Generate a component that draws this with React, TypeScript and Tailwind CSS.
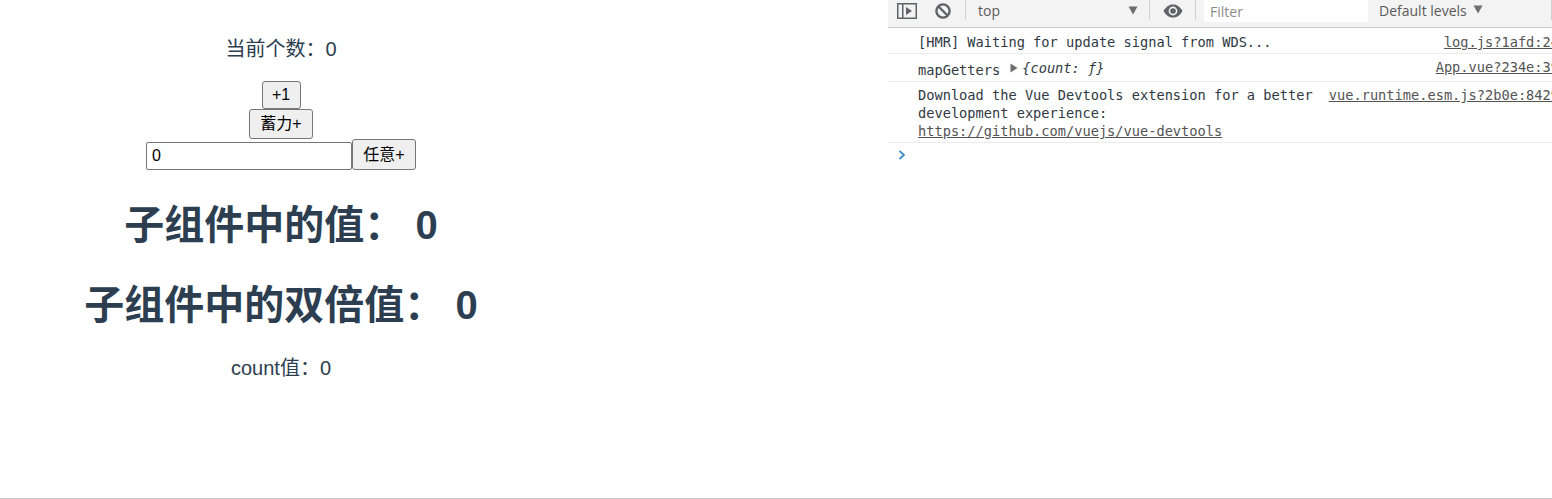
const cjk = "font-['Liberation_Sans','Noto_Sans_CJK_SC',sans-serif]";

const Divider = () => <div className="w-px h-[20px] bg-[#d0d0d0] shrink-0" />;

const Triangle = ({ className }: { className: string }) => (
  <svg width="10" height="9" viewBox="0 0 10 9" className={className}>
    <path d="M0.5 0.5 H9.5 L5 8.5 Z" fill="#6e6e6e" />
  </svg>
);

const Toolbar = () => (
  <div className="h-[28px] shrink-0 flex items-start bg-[#f3f3f3] border-b border-[#cccccc] font-['Open_Sans',sans-serif] text-[14px] text-[#5a5a5a]">
    <svg width="20" height="16" viewBox="0 0 20 16" className="ml-[9px] mt-[3px] shrink-0">
      <rect x="0.75" y="0.75" width="18.5" height="14.5" fill="none" stroke="#5f6368" strokeWidth="1.5" />
      <rect x="5" y="1" width="1.5" height="14" fill="#5f6368" />
      <path d="M9 4 L15 8 L9 12 Z" fill="#5f6368" />
    </svg>
    <svg width="16" height="16" viewBox="0 0 16 16" className="ml-[18px] mt-[3px] mr-[14px] shrink-0">
      <circle cx="8" cy="8" r="6.6" fill="none" stroke="#5f6368" strokeWidth="2.4" />
      <path d="M3.5 3.5 L12.5 12.5" stroke="#5f6368" strokeWidth="2.4" />
    </svg>
    <Divider />
    <div className="flex items-start w-[183px] h-[22px] pl-[12px] leading-[22px] shrink-0">
      <span className="flex-1">top</span>
      <Triangle className="mt-[6px] mr-[11px]" />
    </div>
    <Divider />
    <svg width="20" height="14" viewBox="0 0 20 14" className="ml-[13px] mr-[12px] mt-[4px] shrink-0">
      <path d="M0.5 7 C3.5 2 6.5 0.5 10 0.5 C13.5 0.5 16.5 2 19.5 7 C16.5 12 13.5 13.5 10 13.5 C6.5 13.5 3.5 12 0.5 7 Z" fill="#5f6368" />
      <circle cx="10" cy="7" r="4.4" fill="#f3f3f3" />
      <circle cx="10" cy="7" r="2.8" fill="#5f6368" />
    </svg>
    <Divider />
    <div className="ml-[8px] w-[164px] h-[22px] bg-white pl-[6px] leading-[24px] text-[#8a8a8a] shrink-0">Filter</div>
    <div className="ml-[11px] flex items-start leading-[22px] shrink-0">
      <span>Default levels</span>
      <Triangle className="ml-[6px] mt-[5px]" />
    </div>
    <div className="flex-1" />
    <Divider />
  </div>
);

const Source = ({ children }: { children: string }) => (
  <a className="underline text-[#545454] shrink-0 ml-[15px]">{children}</a>
);

const Console = () => (
  <div className="flex flex-col flex-1 min-w-0 font-['DejaVu_Sans_Mono',monospace] text-[13.67px] leading-[18px] text-[#303942]">
    <Toolbar />
    <div className="h-[26px] border-b border-[#ececec] pl-[30px] pt-[5px] mr-[-7px] flex justify-between">
      <span>[HMR] Waiting for update signal from WDS...</span>
      <Source>log.js?1afd:24</Source>
    </div>
    <div className="h-[28px] border-b border-[#ececec] pl-[30px] pt-[4px] mr-[-7px] flex justify-between">
      <span className="flex items-start">
        <span className="mt-[3px]">mapGetters</span>
        <svg width="8" height="10" viewBox="0 0 8 10" className="ml-[10px] mt-[5px]">
          <path d="M0.5 0.5 L7.5 5 L0.5 9.5 Z" fill="#6e6e6e" />
        </svg>
        <span className="ml-[4px] mt-[1px] italic">{"{count: ƒ}"}</span>
      </span>
      <Source>App.vue?234e:39</Source>
    </div>
    <div className="h-[61px] border-b border-[#ececec] pl-[30px] pt-[4px] mr-[-7px] flex justify-between">
      <div>
        <div>Download the Vue Devtools extension for a better</div>
        <div>development experience:</div>
        <a className="underline text-[#545454]">https://github.com/vuejs/vue-devtools</a>
      </div>
      <Source>vue.runtime.esm.js?2b0e:8429</Source>
    </div>
    <svg width="8" height="10" viewBox="0 0 8 10" className="ml-[10px] mt-[7px]">
      <path d="M1.5 1 L6 5 L1.5 9" fill="none" stroke="#3b8fc4" strokeWidth="1.8" />
    </svg>
  </div>
);

const Demo = () => (
  <div className={`w-[562px] shrink-0 flex flex-col items-center text-[#2c3e50] ${cjk}`}>
    <p className="mt-[36px] text-[20px] leading-[27px]">当前个数：0</p>
    <div className="mt-[18px] flex flex-col items-center text-[16px] text-black">
      <button className="w-[39px] h-[28px] bg-[#efefef] border border-[#767676] rounded-[3px]">+1</button>
      <button className="w-[64px] h-[30px] bg-[#efefef] border border-[#767676] rounded-[3px]">蓄力+</button>
      <div className="flex items-end">
        <input
          readOnly
          value="0"
          className="w-[206px] h-[28px] px-[5px] border border-[#767676] rounded-[2px] bg-white outline-none"
        />
        <button className="w-[64px] h-[31px] bg-[#efefef] border border-[#767676] rounded-[3px]">任意+</button>
      </div>
    </div>
    <h1 className="mt-[28px] text-[40px] leading-[54px] font-bold">子组件中的值： 0</h1>
    <h1 className="mt-[26px] text-[40px] leading-[54px] font-bold">子组件中的双倍值： 0</h1>
    <p className="mt-[23px] text-[20px] leading-[27px]">count值：0</p>
  </div>
);

export default function App() {
  return (
    <div className="w-[1552px] h-[499px] bg-white overflow-hidden border-b border-[#c8c8c8] flex">
      <Demo />
      <div className="w-[326px] shrink-0" />
      <Console />
    </div>
  );
}
